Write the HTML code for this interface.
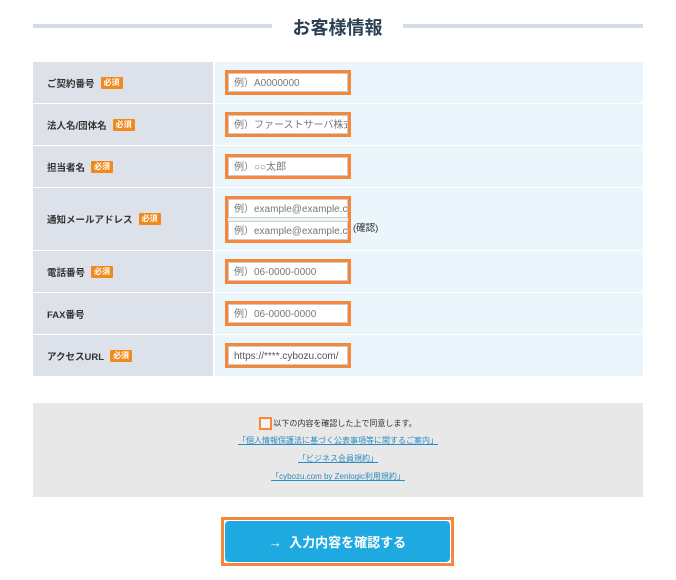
<!DOCTYPE html>
<html><head><meta charset="utf-8"><style>
*{box-sizing:border-box;margin:0;padding:0}
body{width:676px;height:580px;background:#fff;font-family:"Liberation Sans","Noto Sans CJK JP",sans-serif;position:relative;overflow:hidden}
.ln{position:absolute;top:24px;height:4px;background:#d3dde8}
.title{position:absolute;left:272px;width:131px;top:14px;text-align:center;font-size:18px;font-weight:bold;color:#2b3f55}
.row{position:absolute;left:33px;width:610px}
.lab{position:absolute;left:0;top:0;bottom:0;width:180px;background:#dde2ea;font-size:9.5px;font-weight:bold;color:#333;padding-left:14px;display:flex;align-items:center}
.val{position:absolute;left:182px;right:0;top:0;bottom:0;background:#eaf5fc}
.req{display:inline-block;background:#f08a1c;color:#fff;font-size:8px;padding:1px 3px;margin-left:6px;border-radius:1px;line-height:10px}
.ob{position:absolute;left:10px;border:3px solid #f5863a;width:126px}
.in{height:19px;background:#fff;border:1px solid #ccc;font-size:10px;color:#777;padding-left:5px;padding-top:2px;white-space:nowrap;overflow:hidden;display:flex;align-items:center;line-height:1}
.gray{position:absolute;left:33px;top:403px;width:610px;height:94px;background:#e8e8e8;text-align:center;font-size:8px;color:#333}
.gray a{color:#2a8bc0;text-decoration:underline;display:block;margin-top:8px;line-height:10px}
.btnw{position:absolute;left:221px;top:517px;width:233px;height:49px;border:3px solid #f5863a}
.btn{position:absolute;left:1px;top:1px;right:1px;bottom:1px;background:#1fa9e1;border-radius:4px;color:#fff;font-weight:bold;font-size:13px;display:flex;align-items:center;justify-content:center}
</style></head><body>
<div class="ln" style="left:33px;width:239px"></div>
<div class="ln" style="left:403px;width:240px"></div>
<div class="title">お客様情報</div>

<div class="row" style="top:62px;height:41px"><div class="lab">ご契約番号<span class="req">必須</span></div><div class="val"><div class="ob" style="top:8px"><div class="in">例）A0000000</div></div></div></div>
<div class="row" style="top:104px;height:41px"><div class="lab">法人名/団体名<span class="req">必須</span></div><div class="val"><div class="ob" style="top:8px"><div class="in">例）ファーストサーバ株式会社</div></div></div></div>
<div class="row" style="top:146px;height:41px"><div class="lab">担当者名<span class="req">必須</span></div><div class="val"><div class="ob" style="top:8px"><div class="in">例）○○太郎</div></div></div></div>
<div class="row" style="top:188px;height:62px"><div class="lab">通知メールアドレス<span class="req">必須</span></div><div class="val"><div class="ob" style="top:8px"><div class="in">例）example@example.com</div><div class="in" style="margin-top:3px">例）example@example.com</div></div><span style="position:absolute;left:138px;top:36px;font-size:9.5px;color:#333;line-height:1">(確認)</span></div></div>
<div class="row" style="top:251px;height:41px"><div class="lab">電話番号<span class="req">必須</span></div><div class="val"><div class="ob" style="top:8px"><div class="in">例）06-0000-0000</div></div></div></div>
<div class="row" style="top:293px;height:41px"><div class="lab">FAX番号</div><div class="val"><div class="ob" style="top:8px"><div class="in">例）06-0000-0000</div></div></div></div>
<div class="row" style="top:335px;height:41px"><div class="lab">アクセスURL<span class="req">必須</span></div><div class="val"><div class="ob" style="top:8px"><div class="in" style="color:#555">https://****.cybozu.com/</div></div></div></div>

<div class="gray">
<div style="margin-top:14px;line-height:13px"><span style="display:inline-block;width:13px;height:13px;border:2px solid #f5863a;background:#f4f4f4;vertical-align:middle;margin-right:1px"></span>以下の内容を確認した上で同意します。</div>
<a style="margin-top:6px">「個人情報保護法に基づく公表事項等に関するご案内」</a>
<a>「ビジネス会員規約」</a>
<a>「cybozu.com by Zenlogic利用規約」</a>
</div>

<div class="btnw"><div class="btn">→&nbsp;&nbsp;入力内容を確認する</div></div>
</body></html>
